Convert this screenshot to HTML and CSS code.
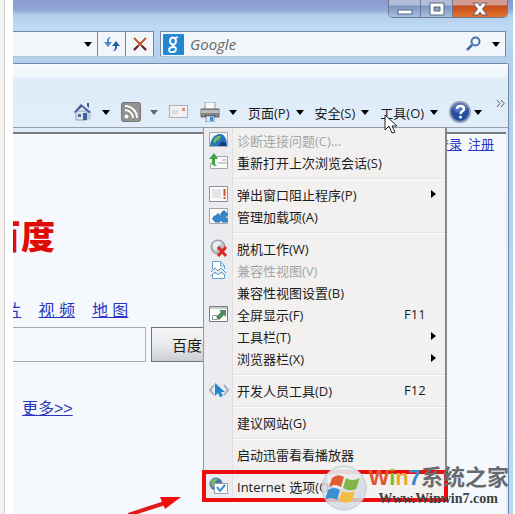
FILE: index.html
```html
<!DOCTYPE html>
<html lang="zh-CN">
<head>
    <meta charset="UTF-8">
    <meta name="viewport" content="width=device-width, initial-scale=1.0">
    <title>Internet 选项</title>
    <link rel="stylesheet" href="styles.css">
</head>
<body>
    <div class="shot">
        <div class="window-controls">
            <button class="win-btn" aria-label="最小化"><svg width="16" height="14" viewBox="0 0 16 14"><rect x="1" y="8" width="14" height="4" fill="#fff" stroke="#596580"/></svg></button>
            <button class="win-btn" aria-label="最大化"><svg width="18" height="14" viewBox="0 0 18 14"><path d="M2 1h14v12H2zM6 5v4h6V5z" fill="#fff" fill-rule="evenodd" stroke="#596580"/></svg></button>
            <button class="win-btn win-close" aria-label="关闭"><svg width="18" height="14" viewBox="0 0 18 14"><path d="M2 1h5l2 3 2-3h5l-4.500 6L16 13h-5L9 10l-2 3H2l4.500-6z" fill="#fff" stroke="#6d5960"/></svg></button>
        </div>

        <div class="nav-bar">
            <div class="address">
                <input class="address-input" type="text" aria-label="地址">
                <button class="drop-btn" aria-label="显示地址"><i class="caret"></i></button>
                <button class="addr-btn" aria-label="刷新"><svg width="16" height="16" viewBox="0 0 16 16"><path d="M7 1C4 1 3 3 3 6H0l4 5 4-5H5c0-2 0-4 2-5z" fill="#4d86c9"/><path d="M9 15c3 0 4-2 4-5h3l-4-5-4 5h3c0 2 0 4-2 5z" fill="#275ea8"/></svg></button>
                <button class="addr-btn" aria-label="停止"><svg width="16" height="16" viewBox="0 0 16 16"><path d="M2 2l12 12" stroke="#c4532b" stroke-width="2"/><path d="M14 2L2 14" stroke="#c4532b" stroke-width="2"/><path d="M10 10l4 4M6 10l-4 4" stroke="#572c2b" stroke-width="2"/></svg></button>
            </div>
            <div class="search">
                <svg class="search-logo" width="21" height="21" viewBox="0 0 21 21"><rect width="21" height="21" rx="1" fill="#2187d3"/><g fill="none" stroke="#fff"><ellipse cx="10" cy="7" rx="3" ry="3.500" stroke-width="2"/><path d="M12 4l3-1M10 10c-2 2 3 2 3 5 0 4-7 4-7 1 0-2 2-3 5-3" stroke-width="1.800"/></g></svg>
                <input class="search-input" type="text" placeholder="Google" aria-label="搜索">
                <button class="search-btn" aria-label="搜索"><svg width="16" height="16" viewBox="0 0 16 16"><path d="M6 9l-5 5" stroke="#3a6cab" stroke-width="2.500"/><circle cx="9.500" cy="5.500" r="4" fill="#eef6fc" stroke="#4674ae" stroke-width="2"/></svg></button>
                <button class="drop-btn" aria-label="搜索选项"><i class="caret"></i></button>
            </div>
        </div>

        <div class="frame">
            <div class="command-bar">
                <button class="command icon-command" aria-label="主页">
                    <svg width="20" height="20" viewBox="0 0 20 20"><path d="M3 9h11v9H3z" fill="#dfe3ec" stroke="#8f9bb8"/><path d="M14 9l4 1v7l-4 1z" fill="#c4cbdc"/><path d="M1 10L8 2l10 8-2 1-7-6-7 6z" fill="#455b9b"/><path d="M14 1h2v5l-2-2z" fill="#3f548f"/><path d="M5 12h3v3H5z" fill="#4d6eab"/><path d="M10 11h4v7h-4z" fill="#3f5e9d"/></svg>
                    <i class="caret"></i>
                </button>
                <button class="command icon-command" aria-label="源">
                    <svg width="20" height="20" viewBox="0 0 20 20"><rect x=".5" y=".5" width="19" height="19" rx="2" fill="#929292" stroke="#767676"/><g fill="none" stroke="#fff" stroke-width="2"><path d="M4 8a8 8 0 0 1 8 8M4 4a12 12 0 0 1 12 12"/></g><circle cx="5.500" cy="14.500" r="2" fill="#fff"/></svg>
                    <i class="caret caret-dim"></i>
                </button>
                <button class="command icon-command" aria-label="邮件">
                    <svg width="20" height="20" viewBox="0 0 20 20"><rect x=".5" y="3.500" width="18" height="12" fill="#f1f1f3" stroke="#aeb0b6"/><path d="M3 9h6M3 11h6" stroke="#c6c8ce"/><path d="M13 6h3v3h-3z" fill="#d69483"/></svg>
                </button>
                <button class="command icon-command" aria-label="打印">
                    <svg width="20" height="20" viewBox="0 0 20 20"><path d="M5 0h10v8H5z" fill="#f8f8f8" stroke="#9c9c9c"/><path d="M1 7h18v8H1z" fill="#858585" stroke="#696969"/><path d="M1 8h18v3H1z" fill="#bcbcbc"/><path d="M5 13h10v2H5z" fill="#3e444c"/><path d="M6 14h8v6H6z" fill="#dceaf9" stroke="#7f91aa"/><path d="M10 15h3v4h-3z" fill="#3690d5"/></svg>
                    <i class="caret"></i>
                </button>
                <button class="command">页面(P)<i class="caret"></i></button>
                <button class="command">安全(S)<i class="caret"></i></button>
                <button class="command">工具(O)<i class="caret"></i></button>
                <button class="command help-command" aria-label="帮助">
                    <svg width="22" height="22" viewBox="0 0 22 22"><circle cx="11" cy="11" r="10" fill="#234d9e" stroke="#929db8" stroke-width="2"/><ellipse cx="11" cy="7" rx="7" ry="5" fill="#688dcf" opacity=".6"/><path d="M8 8c0-4 7-4 7 0 0 2-3 2-3.500 5" fill="none" stroke="#fff" stroke-width="2.400"/><circle cx="11.500" cy="16" r="1.500" fill="#fff"/></svg>
                    <i class="caret"></i>
                </button>
                <button class="overflow-btn" aria-label="更多命令"><svg width="9" height="7" viewBox="0 0 9 7"><path d="M1 0l3 3.500L1 7M5 0l3 3.500L5 7" fill="none" stroke="#555c68"/></svg></button>

                <svg class="cursor" width="14" height="20" viewBox="0 0 14 20"><path d="M1 1v15l4-4 3 7 3-1-3-6h5z" fill="#fff" stroke="#222"/></svg>

                <ul class="menu">
                    <li><button class="menu-item" disabled>
                        <svg width="20" height="18" viewBox="0 0 20 18"><path d="M.5 1.500h18v14H.5z" fill="#f5f7f8" stroke="#a5a8ae"/><path d="M1 15C2 5 8 3 11 3c5 0 7 6 7 12z" fill="#2474b7"/><path d="M4 10c2-5 6-6 8-5l-2 4-3 1-1 3z" fill="#74b866"/><path d="M10 15c1-5 5-5 7-3v3z" fill="#123e7a"/></svg>
                        <span>诊断连接问题(C)...</span></button></li>
                    <li><button class="menu-item">
                        <svg width="20" height="18" viewBox="0 0 20 18"><path d="M5.500 3.500h13v12h-17v-5h4z" fill="#fafafa" stroke="#a2a4a8"/><path d="M9 10h9M13 7h4" stroke="#a2a4a8"/><path d="M5 0L0 6h3v4c0 3 2 3 5 3-2-1-2-2-2-4V6h3z" fill="#43a047"/></svg>
                        <span>重新打开上次浏览会话(S)</span></button></li>
                    <li class="menu-line"></li>
                    <li><button class="menu-item">
                        <svg width="20" height="18" viewBox="0 0 20 18"><path d="M.5 1.500h18v15H.5z" fill="#fafafa" stroke="#8f9196"/><path d="M3 4h9v9H3z" fill="#e3e3e8"/><path d="M15.500 4v7M15.500 12v2" stroke="#d8512d" stroke-width="2"/></svg>
                        <span>弹出窗口阻止程序(P)</span><i class="submenu"></i></button></li>
                    <li><button class="menu-item">
                        <svg width="20" height="18" viewBox="0 0 20 18"><path d="M.5 1.500h18v15H.5z" fill="#fafafa" stroke="#a2a4a8"/><path d="M5 9h3c-1-3 3-3 2 0h2V6h2c-1-3 3-3 2 0h2v3c-2-1-2 3 0 2v4h-5c1-2-3-2-2 0H6v-2c-3 1-3-3-1-2z" fill="#3788cb" stroke="#2670b0"/></svg>
                        <span>管理加载项(A)</span></button></li>
                    <li class="menu-line"></li>
                    <li><button class="menu-item">
                        <svg width="20" height="18" viewBox="0 0 20 18"><circle cx="9" cy="8" r="7" fill="#bdc2c7" stroke="#888e96"/><path d="M4 5c3-4 7-3 9-1L9 7 7 12C4 10 4 8 4 5z" fill="#ebedef"/><path d="M9 8l8 9M17 8l-8 9" stroke="#da2b23" stroke-width="3"/></svg>
                        <span>脱机工作(W)</span></button></li>
                    <li><button class="menu-item" disabled>
                        <svg width="20" height="18" viewBox="0 0 20 18"><path d="M3.500 8V.5h8l4 4V8M11.500 1v4h4M3.500 13v4.500h12V13" fill="#fff" stroke="#62a4d0"/><path d="M2 11l4-4 3 3 3-3 5 5M2 15l4-4 3 3 3-3 4 3" fill="none" stroke="#5198c9"/></svg>
                        <span>兼容性视图(V)</span></button></li>
                    <li><button class="menu-item"><svg width="20" height="18"></svg><span>兼容性视图设置(B)</span></button></li>
                    <li><button class="menu-item">
                        <svg width="20" height="18" viewBox="0 0 20 18"><path d="M.5 1.500h18v15H.5z" fill="#fff" stroke="#777b80"/><path d="M1 2h17v2H1z" fill="#c9ccd0"/><path d="M3.500 10.500h5v4h-5z" fill="#fff" stroke="#999"/><path d="M7 12l5-5-2-2h7v7l-2-2-5 5z" fill="#4f8c57"/></svg>
                        <span>全屏显示(F)</span><kbd>F11</kbd></button></li>
                    <li><button class="menu-item"><svg width="20" height="18"></svg><span>工具栏(T)</span><i class="submenu"></i></button></li>
                    <li><button class="menu-item"><svg width="20" height="18"></svg><span>浏览器栏(X)</span><i class="submenu"></i></button></li>
                    <li class="menu-line"></li>
                    <li><button class="menu-item">
                        <svg width="20" height="18" viewBox="0 0 20 18"><path d="M5 4L1 9l4 5M15 4l4 5-4 5" fill="none" stroke="#a3acb8" stroke-width="2"/><path d="M6 2v13l3-3 2 4 3-1-2-4h4z" fill="#2487cf"/></svg>
                        <span>开发人员工具(D)</span><kbd>F12</kbd></button></li>
                    <li class="menu-line"></li>
                    <li><button class="menu-item"><svg width="20" height="18"></svg><span>建议网站(G)</span></button></li>
                    <li class="menu-line"></li>
                    <li><button class="menu-item"><svg width="20" height="18"></svg><span>启动迅雷看看播放器</span></button></li>
                    <li class="menu-line"></li>
                    <li class="marked"><button class="menu-item">
                        <svg width="20" height="18" viewBox="0 0 20 18"><circle cx="7" cy="7" r="6.500" fill="#4575b4"/><path d="M2 4c2-3 6-3 7-2L6 6l-1 5C2 9 1 7 2 4z" fill="#84b65e"/><path d="M5.500 6.500h13v10h-13z" fill="#fff" stroke="#939eaa"/><path d="M8 10l3 4 5-6" fill="none" stroke="#388dc6" stroke-width="2"/></svg>
                        <span>Internet 选项(O)</span></button></li>
                </ul>
            </div>

            <div class="page">
                <div class="user-links"><a href="#">登录</a><a href="#">注册</a></div>
                <div class="logo">百度</div>
                <div class="tabs"><a href="#">图 片</a><a href="#">视 频</a><a href="#">地 图</a></div>
                <div class="query">
                    <input class="query-input" type="text" aria-label="搜索词">
                    <button class="query-btn">百度一下</button>
                </div>
                <a class="more" href="#">更多&gt;&gt;</a>
            </div>
        </div>

        <svg class="arrow" width="60" height="20" viewBox="0 0 60 20"><path d="M0 21L40 8" stroke="#e31818" stroke-width="4"/><path d="M32 3l21 0-16 12z" fill="#f20d0d"/></svg>

        <div class="watermark">
            <svg width="46" height="48" viewBox="0 0 46 48"><circle cx="23" cy="24" r="22" fill="#d5dce3" fill-opacity=".85" stroke="#c0c7d0"/><ellipse cx="23" cy="14" rx="17" ry="11" fill="#fff" opacity=".4"/><path d="M11 14q6-5 12-1l-3 10q-6-4-12 0z" fill="#e15c30"/><path d="M25 14q6 4 14 0l-4 11q-6 3-13-1z" fill="#7fb54b"/><path d="M7 26q6-4 12 0l-3 10q-6-4-12 0z" fill="#3c8fcf"/><path d="M21 27q7 3 13 0l-3 10q-6 4-13-1z" fill="#f4bd3c"/></svg>
            <div class="brand">
                <div class="brand-name"><span class="w">W</span><span class="i">i</span><span class="n">n</span><span class="seven">7</span>系统之家</div>
                <div class="brand-url">Www.Winwin7.com</div>
            </div>
        </div>
    </div>
</body>
</html>
```
FILE: styles.css
```css
* {
    margin: 0;
    padding: 0;
    box-sizing: border-box;
}

body {
    display: flex;
    height: 100vh;
    overflow: hidden;
    padding-right: 2px;
    background: linear-gradient(90deg, #f3f2f1 4px, #d2d2d2 4px, #d2d2d2 5px, #fff 5px);
    font-family: "Open Sans", "Noto Sans CJK SC", sans-serif;
    font-size: 13px;
    color: #1c1c1c;
}

button,
input {
    font: inherit;
    color: inherit;
    border: none;
    background: none;
}

a {
    color: #2b35c4;
}

.shot {
    position: relative;
    flex: 1;
    min-width: 0;
    margin-left: 13px;
    display: flex;
    flex-direction: column;
    overflow: hidden;
    background: linear-gradient(#8a9bd0 0, #91a7d8 10px, #b4cdec 15px, #bcdaf5 26px, #b5cfee 60px, #b9d8f4 100%);
}

/* 窗口按钮 */
.window-controls {
    display: flex;
    align-self: flex-end;
    height: 18px;
    margin-right: 5px;
    border: 1px solid #6d7995;
    border-top: none;
    border-radius: 0 0 5px 5px;
    overflow: hidden;
}

.win-btn {
    display: flex;
    width: 32px;
    justify-content: center;
    align-items: center;
    border-right: 1px solid #6d7995;
    background: linear-gradient(#b2bddb 5px, #7e94c0 6px, #a5c0e2);
}

.win-close {
    width: 54px;
    border-right: none;
    background: linear-gradient(#d49a8e 5px, #c44b1d 6px, #e5742b);
}

/* 地址栏 */
.nav-bar {
    display: flex;
    gap: 6px;
    height: 26px;
    margin: 13px 7px 6px 0;
}

.address,
.search {
    display: flex;
    align-items: center;
    border: 1px solid #7787a8;
    border-bottom-color: #b6c3d6;
    background: #f2f6fb;
}

.address {
    width: 141px;
    border-left: none;
}

.address-input {
    flex: 1;
    min-width: 0;
}

.drop-btn {
    display: flex;
    justify-content: center;
    width: 18px;
}

.addr-btn {
    display: flex;
    width: 28px;
    height: 24px;
    align-items: center;
    justify-content: center;
    border-left: 1px solid #7787a8;
}

.search {
    flex: 1;
    padding-left: 2px;
}

.search-input {
    flex: 1;
    min-width: 0;
    padding-left: 6px;
    font-size: 15px;
    font-style: italic;
}

.search-input::placeholder {
    color: #666;
}

.search-btn {
    display: flex;
    margin-right: 5px;
}

.caret {
    width: 0;
    height: 0;
    border: 4px solid transparent;
    border-top: 5px solid #000;
    border-bottom: none;
}

.caret-dim {
    border-top-color: #666;
}

/* 命令栏 */
.frame {
    flex: 1;
    display: flex;
    flex-direction: column;
    margin-right: 4px;
    border: 1px solid #7389ac;
    border-left: none;
    border-bottom: none;
    border-top-right-radius: 3px;
    background: #dfebf8;
}

.command-bar {
    position: relative;
    display: flex;
    gap: 11px;
    height: 64px;
    padding: 33px 3px 0 60px;
    border-bottom: 1px solid #9aa0a8;
    background: linear-gradient(#f8fbfe, #f0f6fc 12px, #deebf8 16px, #e1eefa);
}

.command {
    display: flex;
    align-items: center;
    gap: 6px;
    height: 30px;
    white-space: nowrap;
}

.icon-command {
    gap: 9px;
}

.help-command {
    gap: 3px;
}

.overflow-btn {
    display: flex;
    height: 12px;
    align-items: center;
    margin-left: auto;
}

.cursor {
    position: absolute;
    left: 371px;
    top: 50px;
    z-index: 3;
}

/* 工具菜单 */
.menu {
    position: absolute;
    top: 63px;
    left: 190px;
    z-index: 2;
    width: 244px;
    padding: 1px 0 4px;
    list-style: none;
    border: 1px solid #999;
    border-right: 2px solid #888;
    background: linear-gradient(90deg, #ecebf0 28px, #e0e0e2 28px, #e0e0e2 29px, #f2f1f0 29px);
}

.menu-item {
    display: flex;
    width: 100%;
    height: 22px;
    align-items: center;
    gap: 8px;
    padding: 0 9px 0 5px;
    text-align: left;
    white-space: nowrap;
}

.menu-item:disabled {
    color: #a5a5a5;
}

.menu-item span {
    flex: 1;
}

.menu-item kbd {
    width: 32px;
    font: inherit;
}

.menu-line {
    height: 10px;
    margin-left: 30px;
    background: linear-gradient(transparent 5px, #e1e0df 5px, #e1e0df 6px, #fff 6px, #fff 7px, transparent 7px);
}

.submenu {
    border: 4px solid transparent;
    border-left: 5px solid #000;
    border-right: none;
}

.marked {
    position: relative;
}

.marked::after {
    content: "";
    position: absolute;
    inset: -5px -3px -5px -2px;
    border: 4px solid #ee0d0d;
}

/* 网页内容 */
.page {
    flex: 1;
    margin: 4px 2px 0 0;
    border-top: 2px solid #777b83;
    background: #f5f9fd;
    font-family: "Liberation Sans", "Noto Sans CJK SC", sans-serif;
    overflow: hidden;
}

.user-links {
    display: flex;
    justify-content: flex-end;
    gap: 6px;
    padding: 1px 12px 0 0;
    line-height: 20px;
}

.logo {
    margin: 56px 0 0 -26px;
    line-height: 52px;
    font-size: 34px;
    font-weight: 900;
    color: #df0b05;
}

.tabs {
    display: flex;
    gap: 17px;
    margin: 36px 0 0 -28px;
    font-size: 16px;
    line-height: 24px;
}

.query {
    display: flex;
    gap: 5px;
    height: 35px;
    margin-top: 4px;
}

.query-input {
    width: 133px;
    border: 1px solid #a5acb9;
    border-left: none;
}

.query-btn {
    padding: 0 20px;
    font-size: 15px;
    border: 1px solid #70747d;
    background: linear-gradient(#f7f7f8, #e9eaec 50%, #cdced2);
}

.more {
    display: inline-block;
    margin: 35px 0 0 9px;
    font-size: 16px;
    line-height: 24px;
}

.arrow {
    position: absolute;
    left: 115px;
    bottom: 0;
    z-index: 3;
}

/* 水印 */
.watermark {
    position: absolute;
    right: 4px;
    bottom: 2px;
    z-index: 4;
    display: flex;
    align-items: center;
    gap: 1px;
}

.brand {
    padding-bottom: 4px;
}

.brand-name {
    display: flex;
    font: bold 22px/26px "Liberation Sans", "Noto Sans CJK SC", sans-serif;
    color: #686a6d;
}

.w {
    color: #e0562e;
}

.i {
    color: #80b53b;
}

.n {
    color: #efa72e;
}

.seven {
    color: #3489c9;
}

.brand-url {
    padding-left: 10px;
    font: bold 14px/16px "Liberation Serif", serif;
    color: #3c3e42;
}
```
